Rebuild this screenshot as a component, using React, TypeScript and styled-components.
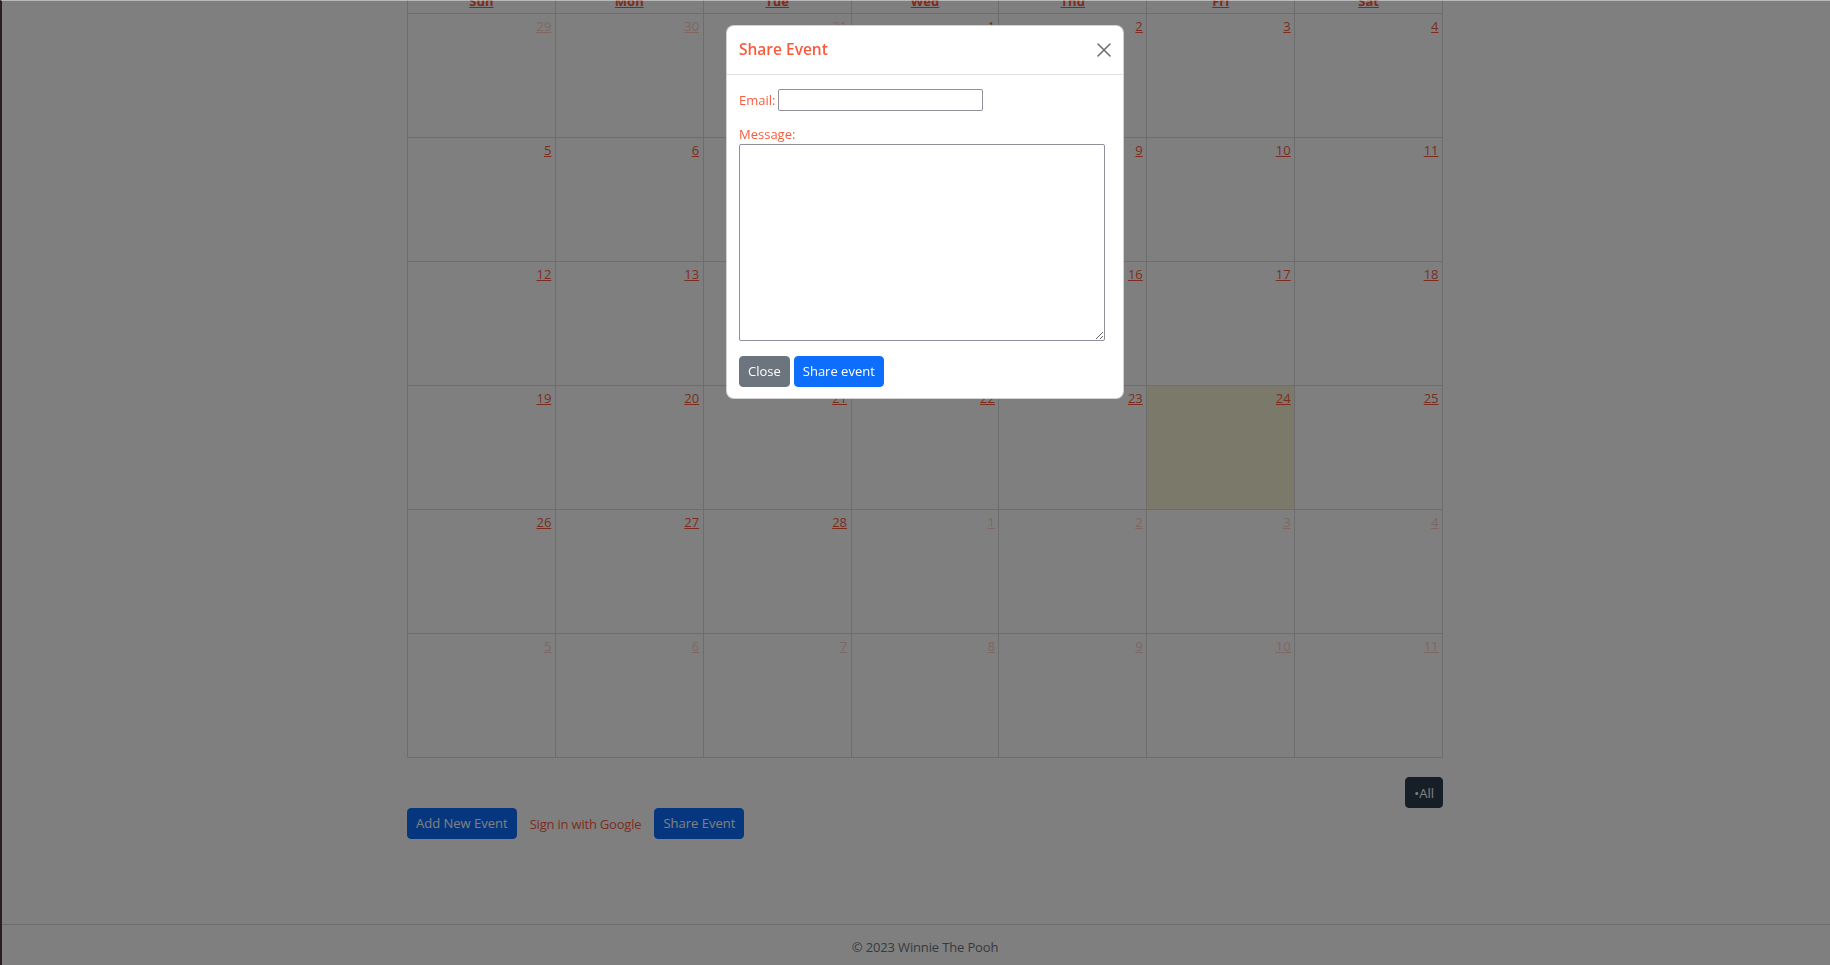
import React from "react";
import styled, { createGlobalStyle } from "styled-components";

const RED = "#f95b3d";
const LINE = "#dadada";

const Global = createGlobalStyle`
  html, body { margin: 0; padding: 0; }
  body {
    font-family: "Open Sans", "Noto Sans", sans-serif;
    font-size: 13px;
    color: #212529;
    background: #ffffff;
  }
  *, *::before, *::after { box-sizing: border-box; }
`;

const Page = styled.div`
  min-height: 100vh;
  display: flex;
  flex-direction: column;
`;

const Main = styled.main`
  flex: 1;
  padding-left: 20px;
`;

const Container = styled.div`
  width: 1036px;
  margin: 0 auto;
`;

const CalGrid = styled.div`
  display: grid;
  grid-template-columns: repeat(7, 1fr);
  border-left: 1px solid ${LINE};
`;

const HeadCell = styled.div`
  height: 14px;
  overflow: hidden;
  display: flex;
  justify-content: center;
  align-items: flex-end;
  padding-bottom: 3px;
  border-right: 1px solid ${LINE};
  border-bottom: 1px solid ${LINE};
`;

const HeadLink = styled.a`
  color: ${RED};
  font-weight: 700;
  line-height: 18px;
  text-decoration: underline;
`;

const DayCell = styled.div<{ $today?: boolean }>`
  height: 124px;
  display: flex;
  justify-content: flex-end;
  align-items: flex-start;
  padding: 3px 3.5px 0 0;
  border-right: 1px solid ${LINE};
  border-bottom: 1px solid ${LINE};
  background: ${(p) => (p.$today ? "#f7f3d3" : "transparent")};
`;

const DayNum = styled.a<{ $other?: boolean }>`
  color: ${RED};
  line-height: 18px;
  text-decoration: underline;
  opacity: ${(p) => (p.$other ? 0.3 : 1)};
`;

const AllRow = styled.div`
  display: flex;
  justify-content: flex-end;
  margin-top: 19px;
`;

const AllButton = styled.button`
  height: 31px;
  padding: 0 8px;
  border: 1px solid #2c3e50;
  border-radius: 4px;
  background: #2c3e50;
  color: #ffffff;
  font-family: inherit;
  font-size: 13px;
`;

const ActionRow = styled.div`
  display: flex;
  align-items: center;
  gap: 13px;
`;

const Btn = styled.button<{ $variant?: "primary" | "secondary" }>`
  height: 31px;
  padding: 0 8px;
  border-radius: 4px;
  border: 1px solid ${(p) => (p.$variant === "secondary" ? "#6c757d" : "#0d6efd")};
  background: ${(p) => (p.$variant === "secondary" ? "#6c757d" : "#0d6efd")};
  color: #ffffff;
  font-family: inherit;
  font-size: 13px;
  line-height: 1.5;
`;

const TextLink = styled.a`
  color: ${RED};
  text-decoration: none;
  font-size: 13px;
  letter-spacing: -0.2px;
`;

const Footer = styled.footer`
  border-top: 1px solid ${LINE};
  padding: 12px 0 8px 20px;
  text-align: center;
  color: #6c757d;
  font-size: 13px;
  line-height: 20px;
  letter-spacing: -0.15px;
`;

const Overlay = styled.div`
  position: fixed;
  inset: 0;
  background: rgba(0, 0, 0, 0.5);
  border-left: 2px solid #2b1d25;
  border-top: 1px solid rgba(255, 255, 255, 0.45);
  padding-left: 18px;
  display: flex;
  justify-content: center;
  align-items: flex-start;
`;

const Dialog = styled.div`
  width: 398px;
  margin-top: 24px;
  background: #ffffff;
  border: 1px solid rgba(0, 0, 0, 0.175);
  border-radius: 8px;
`;

const ModalHeader = styled.div`
  height: 49px;
  display: flex;
  align-items: center;
  justify-content: space-between;
  padding: 0 12px;
  border-bottom: 1px solid #dee2e6;
`;

const ModalTitle = styled.h5`
  margin: 0;
  color: ${RED};
  font-size: 15.5px;
  font-weight: 600;
  line-height: 1.5;
`;

const CloseX = styled.button`
  width: 16px;
  height: 16px;
  padding: 0;
  margin-right: -1px;
  border: 0;
  background: transparent;
  display: flex;
  align-items: center;
  justify-content: center;
`;

const ModalBody = styled.div`
  padding: 14px 12px 11px;
`;

const FieldRow = styled.div`
  display: flex;
  align-items: center;
  gap: 3px;
  height: 22px;
  margin-bottom: 13px;
`;

const Label = styled.label`
  color: ${RED};
  font-size: 13px;
  line-height: 20px;
  display: block;
`;

const TextInput = styled.input`
  width: 205px;
  height: 22px;
  border: 1px solid #8f8f9d;
  border-radius: 2px;
  padding: 1px 3px;
  font-family: inherit;
`;

const TextArea = styled.textarea`
  display: block;
  width: 366px;
  height: 197px;
  border: 1px solid #8f8f9d;
  border-radius: 2px;
  margin: 0 0 15px;
  font-family: inherit;
`;

const ButtonRow = styled.div`
  display: flex;
  gap: 4px;
`;

const ModalBtn = styled(Btn)`
  padding: 0 8px;
`;

type Day = { n: number; other: boolean; today: boolean };

const buildDays = (): Day[] => {
  const days: Day[] = [];
  [29, 30, 31].forEach((n) => days.push({ n, other: true, today: false }));
  for (let n = 1; n <= 28; n++) days.push({ n, other: false, today: n === 24 });
  for (let n = 1; n <= 11; n++) days.push({ n, other: true, today: false });
  return days;
};

const WEEKDAYS = ["Sun", "Mon", "Tue", "Wed", "Thu", "Fri", "Sat"];

export default function App() {
  const days = buildDays();
  return (
    <>
      <Global />
      <Page>
        <Main>
          <Container>
            <CalGrid>
              {WEEKDAYS.map((d) => (
                <HeadCell key={d}>
                  <HeadLink>{d}</HeadLink>
                </HeadCell>
              ))}
              {days.map((d, i) => (
                <DayCell key={i} $today={d.today}>
                  <DayNum $other={d.other}>{d.n}</DayNum>
                </DayCell>
              ))}
            </CalGrid>
            <AllRow>
              <AllButton>•All</AllButton>
            </AllRow>
            <ActionRow>
              <Btn>Add New Event</Btn>
              <TextLink>Sign in with Google</TextLink>
              <Btn>Share Event</Btn>
            </ActionRow>
          </Container>
        </Main>
        <Footer>© 2023 Winnie The Pooh</Footer>
      </Page>
      <Overlay>
        <Dialog>
          <ModalHeader>
            <ModalTitle>Share Event</ModalTitle>
            <CloseX aria-label="Close">
              <svg width="14" height="14" viewBox="0 0 14 14">
                <path d="M1 1 L13 13 M13 1 L1 13" stroke="#6b6b6b" strokeWidth="1.5" strokeLinecap="round" />
              </svg>
            </CloseX>
          </ModalHeader>
          <ModalBody>
            <FieldRow>
              <Label>Email:</Label>
              <TextInput type="email" />
            </FieldRow>
            <Label>Message:</Label>
            <TextArea />
            <ButtonRow>
              <ModalBtn $variant="secondary">Close</ModalBtn>
              <ModalBtn>Share event</ModalBtn>
            </ButtonRow>
          </ModalBody>
        </Dialog>
      </Overlay>
    </>
  );
}
